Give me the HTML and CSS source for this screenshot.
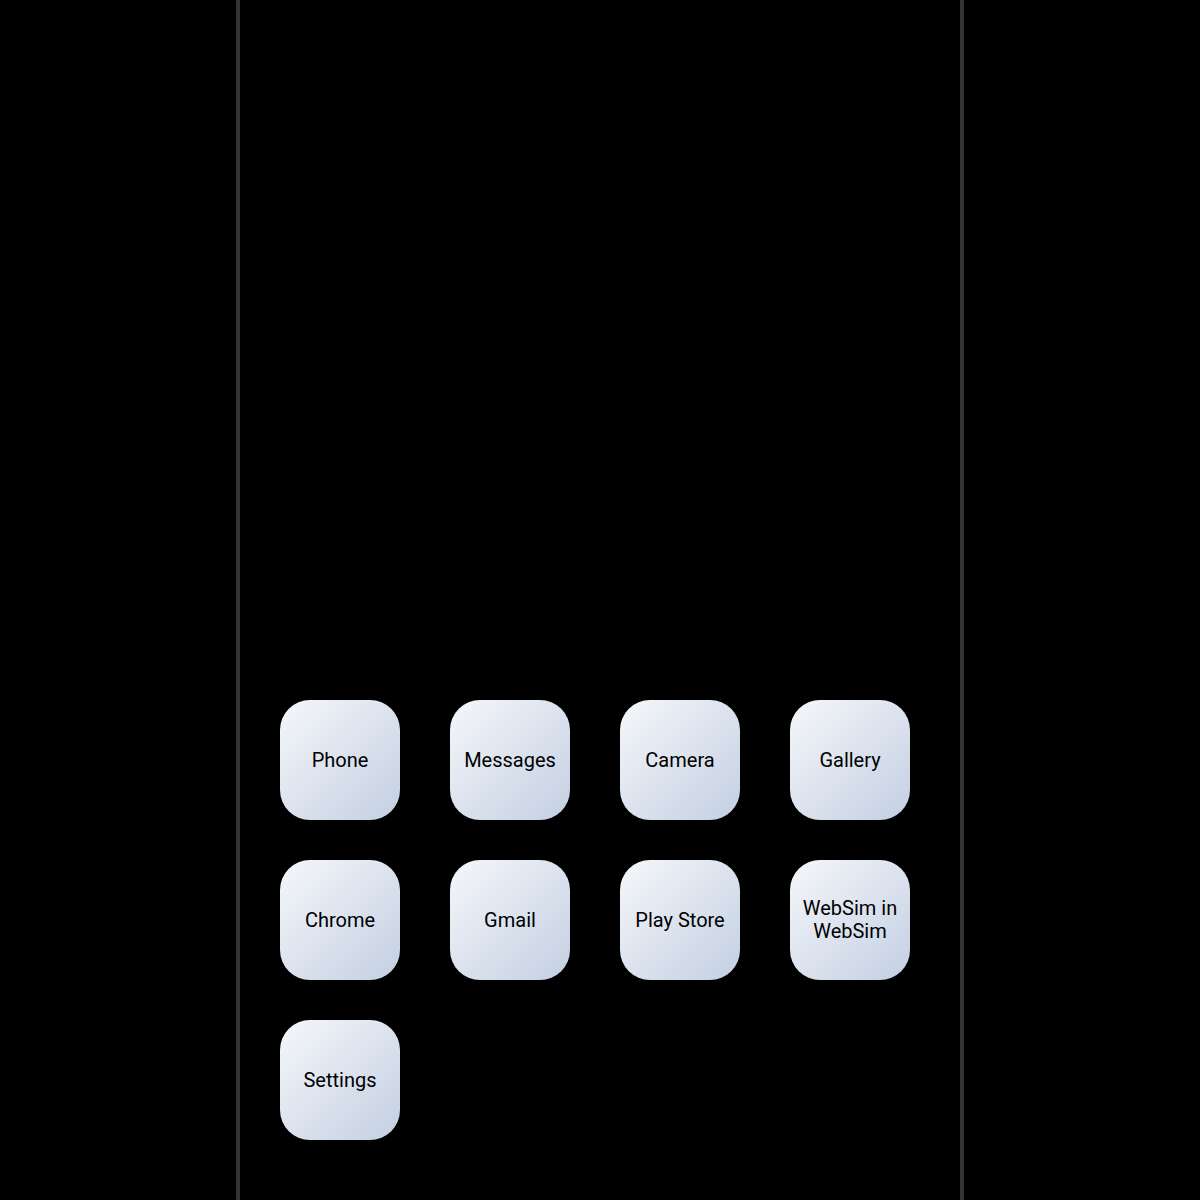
FILE: index.html
```html
<!DOCTYPE html>
<html lang="en">
<head>
<meta charset="utf-8">
<title>Phone Home</title>
<link rel="stylesheet" href="styles.css">
</head>
<body>
<div class="phone">
  <div class="screen">
    <div class="apps">
      <div class="app">Phone</div>
      <div class="app">Messages</div>
      <div class="app">Camera</div>
      <div class="app">Gallery</div>
      <div class="app">Chrome</div>
      <div class="app">Gmail</div>
      <div class="app">Play Store</div>
      <div class="app">WebSim in WebSim</div>
      <div class="app">Settings</div>
    </div>
  </div>
</div>
</body>
</html>
```

FILE: styles.css
```css
html, body {
  margin: 0;
  padding: 0;
  background: #000;
  height: 100%;
}
body {
  display: flex;
  justify-content: center;
  font-family: Roboto, "Liberation Sans", Arial, sans-serif;
}
.phone {
  width: 720px;
  height: 1200px;
  border-left: 4px solid #333;
  border-right: 4px solid #333;
  background: #000;
  display: flex;
  flex-direction: column;
  justify-content: flex-end;
}
.screen {
  padding: 0 50px 60px 40px;
}
.apps {
  display: grid;
  grid-template-columns: repeat(4, 120px);
  column-gap: 50px;
  row-gap: 40px;
}
.app {
  width: 120px;
  height: 120px;
  border-radius: 30px;
  background: linear-gradient(135deg, #f5f7fa 0%, #c3cfe2 100%);
  color: #000;
  font-size: 20px;
  line-height: 23px;
  display: flex;
  align-items: center;
  justify-content: center;
  text-align: center;
  box-sizing: border-box;
  padding: 0 6px;
}
```
